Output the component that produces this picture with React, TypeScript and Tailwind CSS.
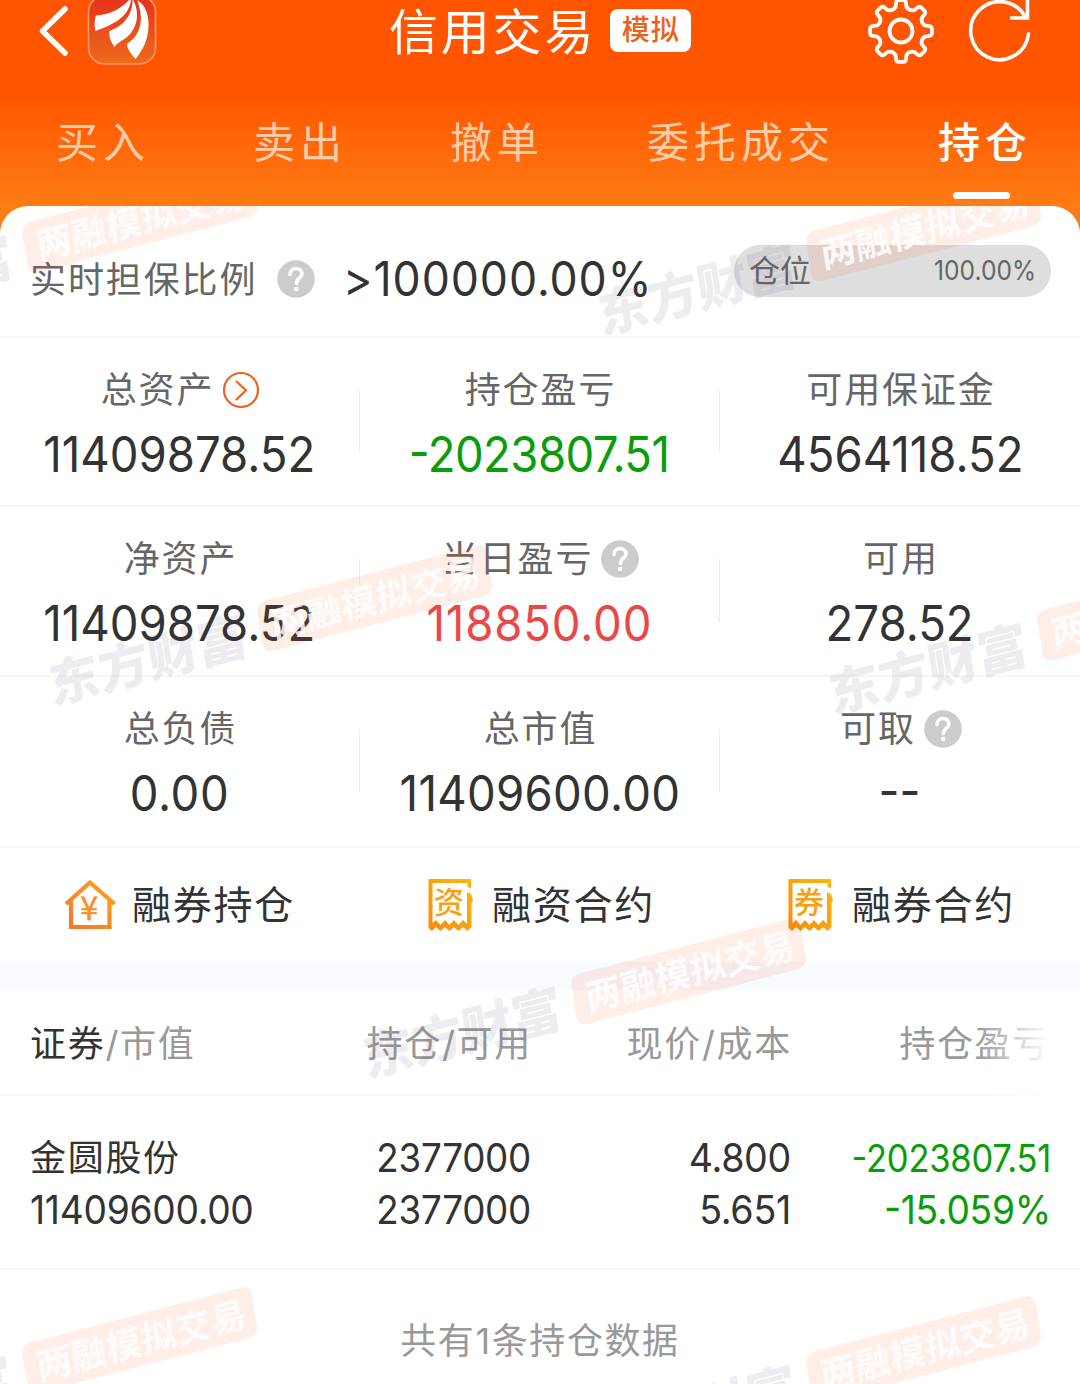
import { ReactNode } from 'react';
import clsx from 'clsx';

const TABS = ['买入', '卖出', '撤单', '委托成交', '持仓'];

type Stat = {
  label: string;
  value: string;
  icon?: 'help' | 'arrow';
  className: string;
};

const STATS: { height: string; items: Stat[] }[] = [
  {
    height: 'h-[169px]',
    items: [
      { label: '总资产', value: '11409878.52', icon: 'arrow', className: 'text-[#333]' },
      { label: '持仓盈亏', value: '-2023807.51', className: 'text-[#0a9d0a] tracking-[-0.6px]' },
      { label: '可用保证金', value: '4564118.52', className: 'text-[#333]' },
    ],
  },
  {
    height: 'h-[170px]',
    items: [
      { label: '净资产', value: '11409878.52', className: 'text-[#333]' },
      { label: '当日盈亏', value: '118850.00', icon: 'help', className: 'text-[#e94848] tracking-[0.9px]' },
      { label: '可用', value: '278.52', className: 'text-[#333]' },
    ],
  },
  {
    height: 'h-[171px]',
    items: [
      { label: '总负债', value: '0.00', className: 'text-[#333] tracking-[0.7px]' },
      { label: '总市值', value: '11409600.00', className: 'text-[#333] tracking-[0.3px]' },
      { label: '可取', value: '--', icon: 'help', className: 'text-[#333]' },
    ],
  },
];

const WATERMARKS = [
  [21, 224],
  [805, 233],
  [256, 603],
  [1036, 612],
  [570, 976],
  [21, 1345],
  [805, 1354],
];

const GEAR_PATH = (() => {
  const pt = (r: number, deg: number) => {
    const a = (deg * Math.PI) / 180;
    return `${(33 + r * Math.sin(a)).toFixed(2)} ${(33 - r * Math.cos(a)).toFixed(2)}`;
  };
  let d = '';
  for (let i = 0; i < 8; i++) {
    const a = i * 45;
    d += `${i === 0 ? 'M' : 'L'}${pt(24.5, a - 13)}L${pt(28.5, a - 10)}Q${pt(31, a - 9)} ${pt(31, a - 4)}`;
    d += `L${pt(31, a + 4)}Q${pt(31, a + 9)} ${pt(28.5, a + 10)}L${pt(24.5, a + 13)}Q${pt(21.5, a + 22.5)} ${pt(24.5, a + 32)}`;
  }
  return d + 'Z';
})();

const BackIcon = () => (
  <svg className="h-[64px] w-[34px]" viewBox="36 0 34 64" fill="none" stroke="#fff" strokeWidth="5.5" strokeLinecap="round" strokeLinejoin="round">
    <path d="M65 9 42.500 31 65 53" />
  </svg>
);

const Logo = () => (
  <svg className="h-[66px] w-[70px]" viewBox="87 0 70 66">
    <defs>
      <linearGradient id="logo" x1="0" y1="0" x2="0" y2="1">
        <stop offset="0" stopColor="#e5321a" />
        <stop offset="1" stopColor="#ef6a1c" />
      </linearGradient>
    </defs>
    <rect x="88.500" y="-4" width="67" height="68" rx="16" fill="url(#logo)" stroke="#ff9c70" strokeWidth="1.5" />
    <path fill="#fff" d="M96 15.500C110 14.500 121 9 130 -1L131 1C128 18 112 25 95.500 31Q93.500 22 96 15.500Z" />
    <path fill="#fff" d="M132.500 -1C139.500 10 139 27 127 37C122 41 117 43 114.500 47Q108 38 109.500 31C122 27 133 16 132.500 -1Z" />
    <path fill="#fff" d="M137 0C146 5 149 16 148.500 27C148 41 142 51 135.500 59Q127 50 127 44C142 34 144 18 137 0Z" />
  </svg>
);

const GearIcon = () => (
  <svg className="h-[66px] w-[66px]" viewBox="0 0 66 66" fill="none" stroke="#fff" strokeWidth="3.8" strokeLinejoin="round">
    <path d={GEAR_PATH} />
    <circle cx="33" cy="33" r="11.500" />
  </svg>
);

const RefreshIcon = () => (
  <svg className="h-[64px] w-[64px]" viewBox="968 0 64 64" fill="none" stroke="#fff" strokeWidth="3.6">
    <path d="M1028.500 34A29 29 0 1 1 1025 16.500" strokeLinecap="round" />
    <path d="M1027.500 0V18H1010" />
  </svg>
);

const HelpIcon = () => (
  <svg className="h-[38px] w-[38px] shrink-0" viewBox="0 0 38 38">
    <circle cx="19" cy="19" r="18.800" fill="#ccc" />
    <path d="M13 14.500C13 6.500 25 6.500 25 14C25 18 19.500 18 19.500 23.500" fill="none" stroke="#fff" strokeWidth="3.6" strokeLinecap="round" />
    <circle cx="19.200" cy="29" r="2.300" fill="#fff" />
  </svg>
);

const ArrowIcon = () => (
  <svg className="h-[38px] w-[38px] shrink-0" viewBox="0 0 38 38" fill="none" stroke="#ec6420" strokeWidth="2.2">
    <circle cx="19" cy="19" r="17" />
    <path d="M14.500 10.500 24 19.300 14.500 28.500" strokeLinecap="round" />
  </svg>
);

const HouseIcon = () => (
  <svg className="-mr-px -ml-[2px] h-[54px] w-[54px]" viewBox="64 878 54 54">
    <defs>
      <linearGradient id="house" x1="1" y1="0" x2="0" y2="1">
        <stop offset="0" stopColor="#ffa21c" />
        <stop offset="1" stopColor="#f9752c" />
      </linearGradient>
    </defs>
    <path d="M67 904 91 882.500 115.500 904M72 901V927H110.500V901" fill="none" stroke="url(#house)" strokeWidth="4.2" />
    <text x="91" y="920" fontSize="32" textAnchor="middle" fill="#f9922a" stroke="#f9922a" strokeWidth=".6" className="font-['Noto_Sans_CJK_SC',sans-serif]">¥</text>
  </svg>
);

const ReceiptIcon = ({ text }: { text: string }) => (
  <svg className="mr-px ml-[2px] h-[54px] w-[48px]" viewBox="427 877 48 54">
    <defs>
      <linearGradient id="receipt" x1="1" y1="0" x2="0" y2="1">
        <stop offset="0" stopColor="#ffb80c" />
        <stop offset="1" stopColor="#f38d10" />
      </linearGradient>
    </defs>
    <path
      d="M428.500 878H471V887L467.500 886V882H432.500V922L436 919 440.500 924 445 919 449.500 924 454 919 458.500 924 463 919 467 923V891L471 893 473 899 471.500 902V926L467.500 930 463 926 458.500 930 454 926 449.500 930 445 926 440.500 930 436 926 432 930 428.500 927Z"
      fill="url(#receipt)"
    />
    <text x="450" y="912" fontSize="30" fontWeight="500" textAnchor="middle" fill="#f9a012" className="font-['Noto_Sans_CJK_SC',sans-serif]">{text}</text>
  </svg>
);

const ACTIONS: { label: string; icon: ReactNode }[] = [
  { label: '融券持仓', icon: <HouseIcon /> },
  { label: '融资合约', icon: <ReceiptIcon text="资" /> },
  { label: '融券合约', icon: <ReceiptIcon text="券" /> },
];

// Slanted brand stamp repeated over the whole card
const Watermark = () => (
  <svg className="pointer-events-none absolute inset-0 h-[1178px] w-[1080px]" viewBox="0 206 1080 1178">
    {WATERMARKS.map(([x, y]) => (
      <g key={`${x}-${y}`} transform={`matrix(.968 -.252 .155 .988 ${x} ${y})`} className="font-['Noto_Sans_CJK_SC',sans-serif]">
        <text x="-218" y="47" fontSize="51" fontWeight="900" fill="#503c64" opacity=".09">东方财富</text>
        <rect width="237" height="51" rx="9" fill="#ff5a14" opacity=".1" />
        <text x="12" y="39" fontSize="36" fontWeight="700" fill="#fff" opacity=".85">两融模拟交易</text>
      </g>
    ))}
  </svg>
);

export default function App() {
  return (
    <div className="h-[1384px] w-[1080px] overflow-hidden bg-linear-to-b from-[#ff5500] from-[95px] to-[#ff7b14] to-[206px] font-['Inter','Noto_Sans_CJK_SC',sans-serif]">
      <header className="h-[206px]">
        <div className="flex h-[66px] items-start pl-[36px]">
          <BackIcon />
          <div className="ml-[17px]">
            <Logo />
          </div>
          <h1 className="ml-[232px] text-[49px] leading-[66px] tracking-[2.8px] text-white">信用交易</h1>
          <span className="mt-[9px] ml-[14px] h-[43px] w-[81px] rounded-[8px] bg-white text-center text-[28px] leading-[43px] font-medium tracking-[1px] text-[#e8621c]">
            模拟
          </span>
          <div className="-mt-[2px] ml-[177px]">
            <GearIcon />
          </div>
          <div className="ml-[34px]">
            <RefreshIcon />
          </div>
        </div>

        <nav className="flex justify-between pt-[47px] pr-[48px] pl-[56px] text-[42px] leading-[60px] tracking-[5px]">
          {TABS.map((tab) => (
            <div key={tab} className={clsx('flex flex-col items-center', tab === '持仓' ? 'font-medium text-white' : 'text-[#ffcda8]')}>
              {tab}
              {tab === '持仓' && <span className="mt-[19px] mr-[7px] h-[7px] w-[57px] rounded-full bg-white" />}
            </div>
          ))}
        </nav>
      </header>

      <main className="relative h-[1178px] overflow-hidden rounded-t-[28px] bg-white">
        <section className="flex h-[132px] items-center border-b-2 border-[#f6f6f6] pt-[15px] pr-[29px] pl-[30px]">
          <span className="pt-[2px] text-[36px] leading-[40px] tracking-[1.9px] text-[#666]">实时担保比例</span>
          <div className="ml-[20px]">
            <HelpIcon />
          </div>
          <span className="ml-[28px] origin-left scale-x-[.93] text-[48px] leading-[50px] tracking-[1px] text-[#333]">&gt;100000.00%</span>
          <div className="mb-[15px] ml-auto flex h-[52px] w-[317px] items-center justify-between rounded-full bg-[#dedede] pr-[15px] pl-[15px] text-[#666]">
            <span className="text-[31px] leading-[40px]">仓位</span>
            <span className="origin-right scale-x-[.91] text-[27px] leading-[40px]">100.00%</span>
          </div>
        </section>

        {STATS.map((row, i) => (
          <section key={i} className={clsx('grid grid-cols-3 border-b-2 border-[#f6f6f6]', row.height)}>
            {row.items.map((stat, j) => (
              <div key={stat.label} className="flex pt-[32px]">
                <div className="flex flex-1 flex-col items-center">
                  <div className="flex h-[40px] items-center gap-[8px] pl-[2px] text-[36px] leading-[40px] tracking-[1.9px] text-[#666]">
                    {stat.label}
                    {stat.icon === 'arrow' && <ArrowIcon />}
                    {stat.icon === 'help' && <HelpIcon />}
                  </div>
                  <div className={clsx("mt-[20px] scale-x-[.93] text-[49px] leading-[50px] [font-feature-settings:'case']", stat.className)}>
                    {stat.value}
                  </div>
                </div>
                {j < 2 && <div className="mt-[20px] h-[63px] w-px bg-[#eee]" />}
              </div>
            ))}
          </section>
        ))}

        <section className="grid h-[114px] grid-cols-3">
          {ACTIONS.map((action) => (
            <div key={action.label} className="flex items-center justify-center gap-[16px] text-[39px] leading-[50px] tracking-[1.8px] text-[#333]">
              {action.icon}
              {action.label}
            </div>
          ))}
        </section>

        <div className="h-[28px] bg-[#f7faff]" />

        <section className="relative grid h-[106px] grid-cols-[300px_202px_260px_258px] items-center border-b-2 border-[#f6f6f6] pt-[3px] pl-[30px] text-right text-[36px] tracking-[1.7px] text-[#999]">
          <div className="text-left">
            <span className="text-[#333]">证券</span>/市值
          </div>
          <div>持仓/可用</div>
          <div>现价/成本</div>
          <div>持仓盈亏</div>
          <div className="absolute top-0 right-0 h-[106px] w-[105px] bg-linear-to-r from-white/0 to-white to-[75px]" />
        </section>

        <section className="grid h-[174px] grid-cols-[300px_201px_260px_260px] content-center gap-y-[12px] border-b-2 border-[#f6f6f6] pt-[4px] pl-[30px] text-right text-[40px] leading-[40px] tracking-[-0.3px] text-[#333] [font-feature-settings:'case']">
          <div className="text-left text-[36px] tracking-[1.7px]">金圆股份</div>
          <div className="origin-right scale-x-[.92]">2377000</div>
          <div className="origin-right scale-x-[.94]">4.800</div>
          <div className="origin-right scale-x-[.91] text-[38px] text-[#0a9d0a]">-2023807.51</div>
          <div className="origin-left scale-x-[.93] text-left">11409600.00</div>
          <div className="origin-right scale-x-[.92]">2377000</div>
          <div className="origin-right scale-x-[.94]">5.651</div>
          <div className="origin-right scale-x-[.93] text-[#0a9d0a]">-15.059%</div>
        </section>

        <p className="pt-[51px] text-center text-[36px] leading-[40px] tracking-[1.6px] text-[#999]">共有1条持仓数据</p>

        <Watermark />
      </main>
    </div>
  );
}
